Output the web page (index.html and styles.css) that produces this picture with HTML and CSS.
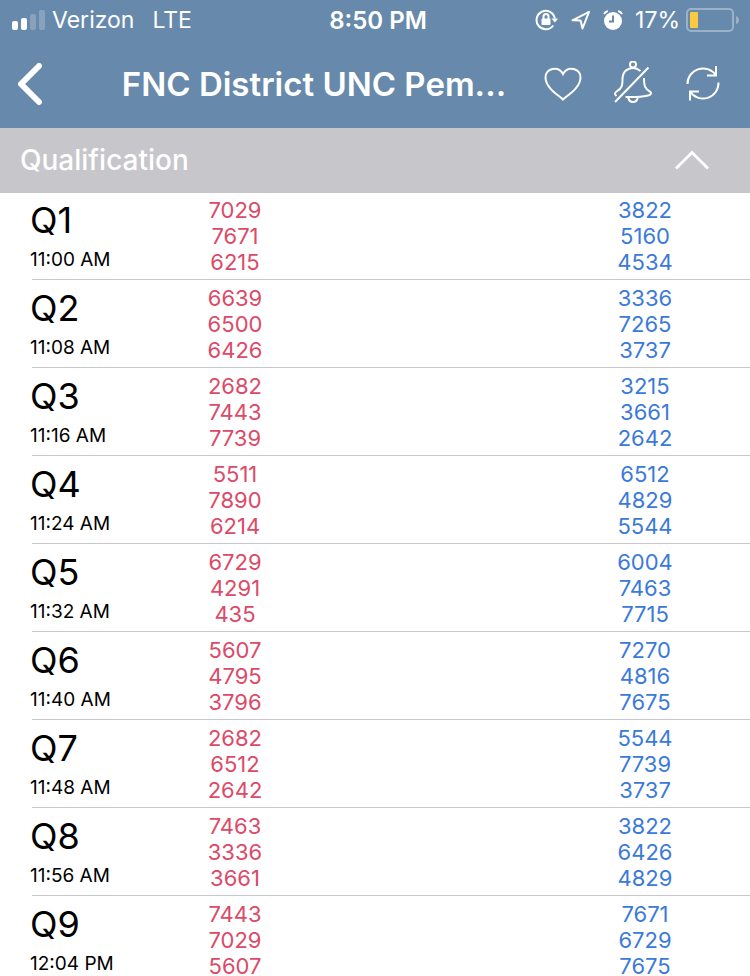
FILE: index.html
```html
<!DOCTYPE html>
<html lang="en">
<head>
<meta charset="utf-8">
<meta name="viewport" content="width=device-width, initial-scale=1">
<title>FNC District UNC Pem...</title>
<link rel="stylesheet" href="styles.css">
</head>
<body>
<header class="top">
  <div class="status">
    <div class="status-left">
      <svg class="signal" width="34" height="20" viewBox="0 0 34 20" aria-hidden="true"><rect x="0" y="11" width="6" height="9" rx="2"/><rect x="9" y="8" width="6" height="12" rx="2"/><rect class="dim" x="18" y="4" width="6" height="16" rx="2"/><rect class="dim" x="27" y="0" width="6" height="20" rx="2"/></svg>
      <span>Verizon</span><span class="network">LTE</span>
    </div>
    <div class="clock">8:50 PM</div>
    <div class="status-right">
      <svg width="24" height="22" viewBox="0 0 24 22" aria-hidden="true"><path class="line" d="M18.2 16.500A9.200 9.200 0 1 1 19.800 9.500"/><path class="solid" d="M16.400 9.600h6.800l-3.400 4z"/><rect class="solid" x="6.500" y="9.500" width="9" height="6.500" rx="1"/><path class="line" d="M8.500 10V7.500a2.500 2.500 0 0 1 5 0V10"/></svg>
      <svg width="20" height="20" viewBox="0 0 20 20" aria-hidden="true"><path class="line" d="M1.500 10.300L18 1.800 11.500 18.500 9.600 10.500z"/></svg>
      <svg width="20" height="20" viewBox="0 0 20 20" aria-hidden="true"><circle class="solid" cx="10" cy="11" r="9"/><path class="line" d="M1 4.200Q2 1.800 4.800 1M19 4.200Q18 1.800 15.200 1"/><path class="hands" d="M10 5.500V11.500H6"/></svg>
      <span>17%</span>
      <svg width="54" height="24" viewBox="0 0 54 24" aria-hidden="true"><rect class="shell" x="1" y="1" width="46" height="22" rx="4"/><rect class="charge" x="4" y="4" width="8" height="16" rx="1"/><path class="dim" d="M50 8q3 1 3 4t-3 4z"/></svg>
    </div>
  </div>
  <nav class="bar">
    <button class="back" aria-label="Back"><svg width="24" height="42" viewBox="0 0 24 42"><path d="M21 3L3 21 21 39"/></svg></button>
    <h1>FNC District UNC Pem...</h1>
    <button class="tool" aria-label="Favorite"><svg width="44" height="44" viewBox="0 0 44 44"><path d="M22 37.500C18 33.500 4.500 26 4.500 15.500C4.500 6 17.500 3.500 22 12C26.500 3.500 39.500 6 39.500 15.500C39.500 26 26 33.500 22 37.500z"/></svg></button>
    <button class="tool" aria-label="Mute notifications"><svg width="44" height="46" viewBox="0 0 44 46"><circle cx="22" cy="3.500" r="3"/><path d="M29.500 10C23 4.500 12 7 11.500 17C11.500 24 11.500 27 5.500 30.500C3.500 32 3.500 33.500 5.500 35M33 17C33 25 34 28 39.500 31C42 34 36 36.500 14.500 36M17 36a5.200 7 0 0 0 10 0M4 41L37.500 6.500"/></svg></button>
    <button class="tool" aria-label="Refresh"><svg width="44" height="44" viewBox="0 0 44 44"><path d="M6.500 22A15.500 15.500 0 0 1 35 13.500M35 4V13.500H26M37.500 20.500A15.500 15.500 0 0 1 9 29.500M9 38.500V29.500H18"/></svg></button>
  </nav>
</header>
<main>
  <button class="section" aria-expanded="true"><span>Qualification</span><svg width="36" height="20" viewBox="0 0 36 20" aria-hidden="true"><path d="M2 18.500L18 2.500 34 18.500"/></svg></button>
  <table class="matches">
    <tbody>
      <tr><th scope="row"><b>Q1</b><time>11:00 AM</time></th><td class="red">7029<br>7671<br>6215</td><td class="blue">3822<br>5160<br>4534</td></tr>
      <tr><th scope="row"><b>Q2</b><time>11:08 AM</time></th><td class="red">6639<br>6500<br>6426</td><td class="blue">3336<br>7265<br>3737</td></tr>
      <tr><th scope="row"><b>Q3</b><time>11:16 AM</time></th><td class="red">2682<br>7443<br>7739</td><td class="blue">3215<br>3661<br>2642</td></tr>
      <tr><th scope="row"><b>Q4</b><time>11:24 AM</time></th><td class="red">5511<br>7890<br>6214</td><td class="blue">6512<br>4829<br>5544</td></tr>
      <tr><th scope="row"><b>Q5</b><time>11:32 AM</time></th><td class="red">6729<br>4291<br>435</td><td class="blue">6004<br>7463<br>7715</td></tr>
      <tr><th scope="row"><b>Q6</b><time>11:40 AM</time></th><td class="red">5607<br>4795<br>3796</td><td class="blue">7270<br>4816<br>7675</td></tr>
      <tr><th scope="row"><b>Q7</b><time>11:48 AM</time></th><td class="red">2682<br>6512<br>2642</td><td class="blue">5544<br>7739<br>3737</td></tr>
      <tr><th scope="row"><b>Q8</b><time>11:56 AM</time></th><td class="red">7463<br>3336<br>3661</td><td class="blue">3822<br>6426<br>4829</td></tr>
      <tr><th scope="row"><b>Q9</b><time>12:04 PM</time></th><td class="red">7443<br>7029<br>5607</td><td class="blue">7671<br>6729<br>7675</td></tr>
    </tbody>
  </table>
</main>
</body>
</html>
```
FILE: styles.css
```css
* { box-sizing: border-box; }
html { scrollbar-width: none; }
body { margin: 0; background: #fff; color: #000; font-family: Inter, "Liberation Sans", sans-serif; }
button { margin: 0; padding: 0; border: 0; background: none; color: inherit; font: inherit; }
svg { display: block; flex: none; fill: none; }

.top { background: #6789ab; color: #fff; }
.status { display: grid; grid-template-columns: 1fr auto 1fr; align-items: center; height: 40px; padding: 0 12px; font-size: 23px; }
.status-left, .status-right { display: flex; align-items: center; }
.status-left { gap: 6px; }
.network { margin-left: 12px; }
.clock { padding-left: 6px; font-size: 24px; font-weight: 600; }
.status-right { justify-content: flex-end; gap: 12px; margin-right: -2px; }
.status-right span { margin-right: -6px; }
.signal { fill: #fff; }
.dim { fill: #9bb1c8; }
.signal .dim { fill: #88a2be; }
.line { stroke: #fff; stroke-width: 2; stroke-linejoin: round; }
.solid { fill: #fff; }
.hands { stroke: #6789ab; stroke-width: 2; }
.shell { stroke: #9bb1c8; stroke-width: 2; }
.charge { fill: #fdc93f; }

.bar { display: flex; align-items: center; height: 88px; padding-right: 12px; }
.back { width: 100px; padding-left: 18px; }
.back path { stroke: #fff; stroke-width: 6; stroke-linecap: round; stroke-linejoin: round; }
h1 { flex: 1; margin: 0; font-size: 33px; font-weight: 600; text-align: center; white-space: nowrap; }
.tool { display: flex; justify-content: center; width: 70px; }
.tool svg { stroke: #fff; stroke-width: 2; }

.section { display: flex; align-items: center; justify-content: space-between; width: 100%; height: 64px; padding: 0 40px 0 20px; background: #c7c6cb; box-shadow: 0 1px #c7c6cb; color: #fff; font-size: 28px; font-weight: 500; }
.section path { stroke: #fff; stroke-width: 3; }

.matches { width: 100%; border-collapse: collapse; table-layout: fixed; }
.matches tr { height: 88px; background: linear-gradient(#c8c7cc, #c8c7cc) 32px 100% / 100% 1px no-repeat; }
th, td { padding: 5px 0; font-size: 22px; font-weight: 400; line-height: 26px; text-align: center; }
th { width: 130px; padding-left: 30px; text-align: left; white-space: nowrap; }
th b { display: block; font-size: 36px; font-weight: 400; line-height: 46px; }
time { display: block; padding-top: 2px; font-size: 19px; line-height: 30px; }
.red { width: 210px; color: #dc4a68; }
.blue { padding-left: 200px; color: #3b7ad9; }
```
